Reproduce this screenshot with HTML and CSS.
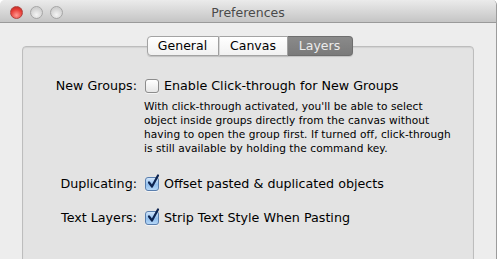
FILE: index.html
```html
<!DOCTYPE html>
<html lang="en">
<head>
  <meta charset="UTF-8">
  <title>Preferences</title>
  <link rel="stylesheet" href="styles.css">
</head>
<body>
  <div class="window">
    <div class="titlebar">
      <div class="lights">
        <span class="light close"></span>
        <span class="light"></span>
        <span class="light"></span>
      </div>
      <div class="title">Preferences</div>
      <div></div>
    </div>

    <div class="content">
      <div class="tabs">
        <div class="tab">General</div>
        <div class="tab">Canvas</div>
        <div class="tab active">Layers</div>
      </div>

      <div class="panel">
        <div class="row">
          <div class="label">New Groups:</div>
          <div class="field">
            <span class="check"></span>
            <span>Enable Click-through for New Groups</span>
          </div>
        </div>
        <p class="note">With click-through activated, you'll be able to select<br>object inside groups directly from the canvas without<br>having to open the group first. If turned off, click-through<br>is still available by holding the command key.</p>

        <div class="row dup">
          <div class="label">Duplicating:</div>
          <div class="field">
            <span class="check on">
              <svg viewBox="0 0 14 16" width="14" height="16"><path d="M3 8.5 L6 12.5 L12 1.5" fill="none" stroke="#0d2450" stroke-width="2.2" stroke-linecap="round" stroke-linejoin="round"/></svg>
            </span>
            <span>Offset pasted &amp; duplicated objects</span>
          </div>
        </div>

        <div class="row text">
          <div class="label">Text Layers:</div>
          <div class="field">
            <span class="check on">
              <svg viewBox="0 0 14 16" width="14" height="16"><path d="M3 8.5 L6 12.5 L12 1.5" fill="none" stroke="#0d2450" stroke-width="2.2" stroke-linecap="round" stroke-linejoin="round"/></svg>
            </span>
            <span>Strip Text Style When Pasting</span>
          </div>
        </div>
      </div>
    </div>
  </div>
</body>
</html>
```

FILE: styles.css
```css
/* Base */
body {
  margin: 0;
  background-color: #fff;
  font-family: 'DejaVu Sans', sans-serif;
  color: #000;
}

/* Window */
.window {
  width: 496px;
  height: 259px;
  overflow: hidden;
  border-right: 1px solid #9c9c9c;
  border-radius: 5px 5px 0 0;
  background-color: #ededed;
}

/* Title bar */
.titlebar {
  height: 22px;
  display: grid;
  grid-template-columns: 1fr auto 1fr;
  align-items: center;
  background: linear-gradient(#ebebeb, #c5c5c5);
  border-bottom: 1px solid #9a9a9a;
}

.lights {
  display: flex;
  gap: 7px;
  padding-left: 10px;
  padding-top: 3px;
}

.light {
  width: 11px;
  height: 11px;
  border-radius: 50%;
  border: 1px solid #a5a5a5;
  background: radial-gradient(circle at 50% 70%, #f4f4f4, #cfcfcf 70%);
}

.light.close {
  border-color: #b0433f;
  background: radial-gradient(circle at 50% 75%, #ff9a92, #e9413a 55%, #b8221c);
}

.title {
  font-size: 12.5px;
  color: #4a4a4a;
  padding-top: 2px;
}

/* Content */
.content {
  padding-top: 13px;
}

.tabs {
  position: relative;
  z-index: 1;
  display: flex;
  justify-content: center;
  padding-left: 3px;
}

.tab {
  height: 18px;
  line-height: 18px;
  font-size: 12.5px;
  text-align: center;
  background: linear-gradient(#ffffff, #f1f1f1);
  border: 1px solid #a3a3a3;
  border-left: none;
  box-shadow: 0 1px 1px rgba(0, 0, 0, 0.15);
}

.tab:nth-child(1) {
  width: 70px;
  border-left: 1px solid #a3a3a3;
  border-radius: 4px 0 0 4px;
}

.tab:nth-child(2) {
  width: 67px;
  border-left: 1px solid #d8d8d8;
}

.tab.active {
  width: 64px;
  color: #ececec;
  background: linear-gradient(#8a8a8a, #7a7a7a);
  border-color: #6e6e6e;
  border-radius: 0 4px 4px 0;
}

/* Tab panel */
.panel {
  margin: -10px 22px 0;
  height: 240px;
  background-color: #e3e3e3;
  border: 1px solid #bdbdbd;
  border-radius: 4px 4px 0 0;
  box-shadow: inset 0 1px 1px rgba(0, 0, 0, 0.08);
  padding-top: 31px;
}

.row {
  display: grid;
  grid-template-columns: 114px 1fr;
  column-gap: 8px;
  align-items: center;
  font-size: 12.7px;
}

.label {
  text-align: right;
}

.field {
  display: flex;
  align-items: center;
  gap: 5px;
}

.note {
  margin: 6px 0 0 121px;
  white-space: nowrap;
  font-size: 10.6px;
  line-height: 14px;
  letter-spacing: 0.05px;
}

.row.dup {
  margin-top: 21px;
}

.row.text {
  margin-top: 19px;
}

/* Checkboxes */
.check {
  position: relative;
  width: 12px;
  height: 12px;
  border: 1px solid #8c8c8c;
  border-radius: 3px;
  background: linear-gradient(#ffffff, #e6e6e6);
  box-shadow: 0 1px 0 rgba(255, 255, 255, 0.6);
}

.check.on {
  border-color: #5a7fae;
  background: linear-gradient(#d2e6fb, #93c0ee 55%, #b5d6f6);
}

.check svg {
  position: absolute;
  left: 0;
  top: -4px;
}
```
